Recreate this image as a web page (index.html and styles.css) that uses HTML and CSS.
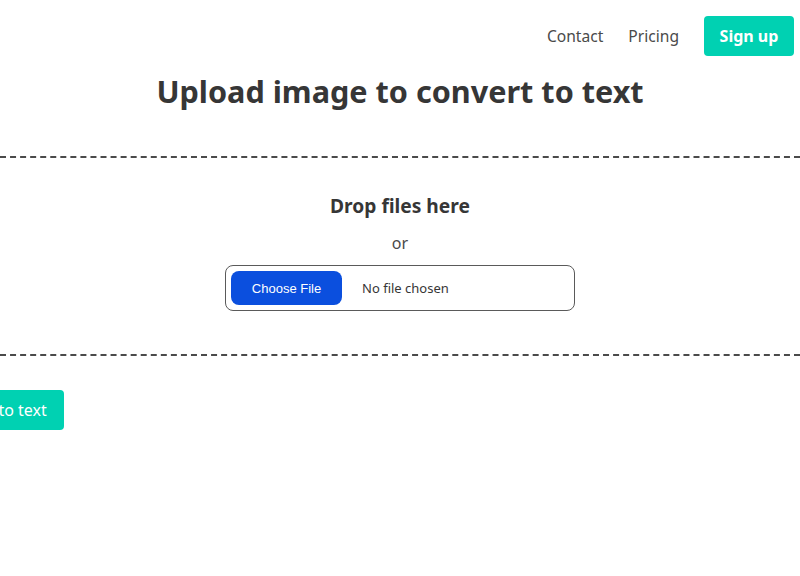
FILE: index.html
```html
<!DOCTYPE html>
<html lang="en">
<head>
<meta charset="utf-8">
<title>Upload image to convert to text</title>
<link rel="stylesheet" href="styles.css">
</head>
<body>
<header class="nav">
  <a class="nav-link" href="#">Contact</a>
  <a class="nav-link" href="#">Pricing</a>
  <a class="btn btn-primary btn-signup" href="#">Sign up</a>
</header>
<main>
  <h1 class="title">Upload image to convert to text</h1>
  <section class="dropzone">
    <p class="drop-title">Drop files here</p>
    <p class="drop-or">or</p>
    <label class="file-box">
      <input class="file-input" type="file">
    </label>
  </section>
  <div class="actions">
    <button class="btn btn-primary btn-convert">Convert image to text</button>
  </div>
</main>
</body>
</html>
```
FILE: styles.css
```css
html, body {
  margin: 0;
  padding: 0;
  background: #fff;
}
body {
  font-family: "Noto Sans", "Open Sans", sans-serif;
  color: #4a4a4a;
  width: 800px;
  overflow: hidden;
}
.nav {
  display: flex;
  justify-content: flex-end;
  align-items: center;
  gap: 25px;
  padding: 16px 6px 0 0;
  height: 40px;
}
.nav-link {
  color: #4a4a4a;
  text-decoration: none;
  font-size: 15.6px;
}
.btn {
  display: inline-flex;
  align-items: center;
  justify-content: center;
  border: none;
  border-radius: 4px;
  font-family: inherit;
  text-decoration: none;
  cursor: pointer;
}
.btn-primary {
  background: #00d1b2;
  color: #fff;
}
.btn-signup {
  width: 90px;
  height: 40px;
  font-weight: 700;
  font-size: 16px;
}
.title {
  margin: 17px 0 0;
  text-align: center;
  font-size: 30.6px;
  line-height: 36px;
  font-weight: 700;
  color: #363636;
}
.dropzone {
  margin-top: 47px;
  border-top: 2px dashed #4a4a4a;
  border-bottom: 2px dashed #4a4a4a;
  height: 196px;
  display: flex;
  flex-direction: column;
  align-items: center;
}
.drop-title {
  margin: 36px 0 0;
  font-size: 19.2px;
  line-height: 24px;
  font-weight: 700;
  color: #363636;
}
.drop-or {
  margin: 14px 0 0;
  font-size: 16px;
  line-height: 22px;
}
.file-box {
  margin-top: 11px;
  width: 350px;
  height: 46px;
  box-sizing: border-box;
  border: 1px solid #5a5a5a;
  border-radius: 8px;
  display: flex;
  align-items: center;
  padding-left: 5px;
}
.file-input {
  font-family: inherit;
  font-size: 13px;
  color: #363636;
}
.file-input::file-selector-button {
  font-family: "Liberation Sans", Arial, sans-serif;
  font-size: 13px;
  background: #0b4fde;
  color: #fff;
  border: none;
  border-radius: 8px;
  width: 111px;
  height: 34px;
  margin-right: 20px;
}
.actions {
  display: flex;
  margin-top: 34px;
}
.btn-convert {
  margin-left: -133px;
  height: 40px;
  padding: 0 17px;
  font-size: 16px;
  white-space: nowrap;
}
```
